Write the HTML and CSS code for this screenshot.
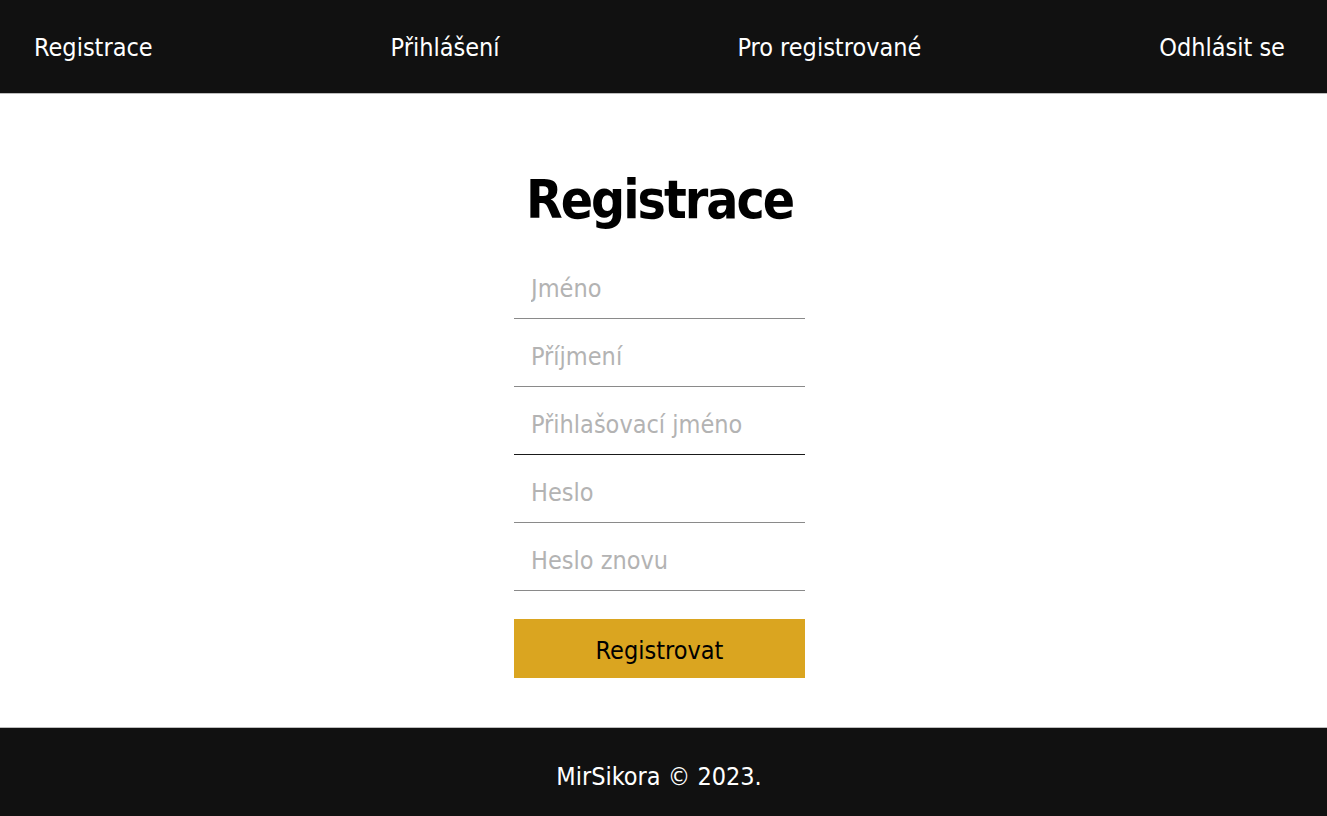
FILE: index.html
```html
<!DOCTYPE html>
<html lang="cs">
<head>
<meta charset="utf-8">
<title>Registrace</title>
<link rel="stylesheet" href="styles.css">
</head>
<body>
<header class="site-header">
  <nav class="nav">
    <a class="nav-link" href="#">Registrace</a>
    <a class="nav-link" href="#">Přihlášení</a>
    <a class="nav-link" href="#">Pro registrované</a>
    <a class="nav-link" href="#">Odhlásit se</a>
  </nav>
</header>
<main class="content">
  <h1 class="title">Registrace</h1>
  <form class="form">
    <input class="field" type="text" placeholder="Jméno">
    <input class="field" type="text" placeholder="Příjmení">
    <input class="field field-active" type="text" placeholder="Přihlašovací jméno">
    <input class="field" type="password" placeholder="Heslo">
    <input class="field" type="password" placeholder="Heslo znovu">
    <button class="submit" type="button">Registrovat</button>
  </form>
</main>
<footer class="site-footer">
  <p class="copy">MirSikora © 2023.</p>
</footer>
</body>
</html>
```
FILE: styles.css
```css
* { box-sizing: border-box; }
html, body { margin: 0; padding: 0; }
body {
  font-family: "DejaVu Sans Condensed", "DejaVu Sans", sans-serif;
  font-stretch: condensed;
  background: #fff;
  color: #000;
}
.site-header {
  background: #111;
  height: 94px;
  border-bottom: 1px solid #bdbdbd;
}
.nav {
  height: 93px;
  display: flex;
  justify-content: space-between;
  align-items: center;
  padding: 2px 42px 0 34px;
}
.nav-link {
  color: #fff;
  text-decoration: none;
  font-size: 25px;
}
.content {
  display: flex;
  flex-direction: column;
  align-items: center;
  padding: 71px 8px 49px 0;
}
.title {
  margin: 0 0 16px;
  font-size: 53px;
  font-weight: bold;
  font-stretch: condensed;
  letter-spacing: -2px;
  line-height: 70px;
}
.form {
  width: 291px;
  display: flex;
  flex-direction: column;
}
.field {
  display: block;
  width: 100%;
  height: 68px;
  border: none;
  border-bottom: 1px solid #8a8a8a;
  padding: 8px 17px 0;
  font-family: inherit;
  font-stretch: condensed;
  font-size: 25px;
  outline: none;
  background: transparent;
}
.field::placeholder { color: #b3b3b3; }
.field-active { border-bottom-color: #1a1a1a; }
.submit {
  margin-top: 28px;
  height: 59px;
  border: none;
  padding: 4px 0 0;
  background: #daa520;
  color: #000;
  font-family: inherit;
  font-stretch: condensed;
  font-size: 25px;
  cursor: pointer;
}
.site-footer {
  background: #111;
  border-top: 1px solid #bdbdbd;
  height: 89px;
  display: flex;
  align-items: center;
  justify-content: center;
  padding: 8px 9px 0 0;
}
.copy {
  margin: 0;
  color: #fff;
  font-size: 25px;
}
```
